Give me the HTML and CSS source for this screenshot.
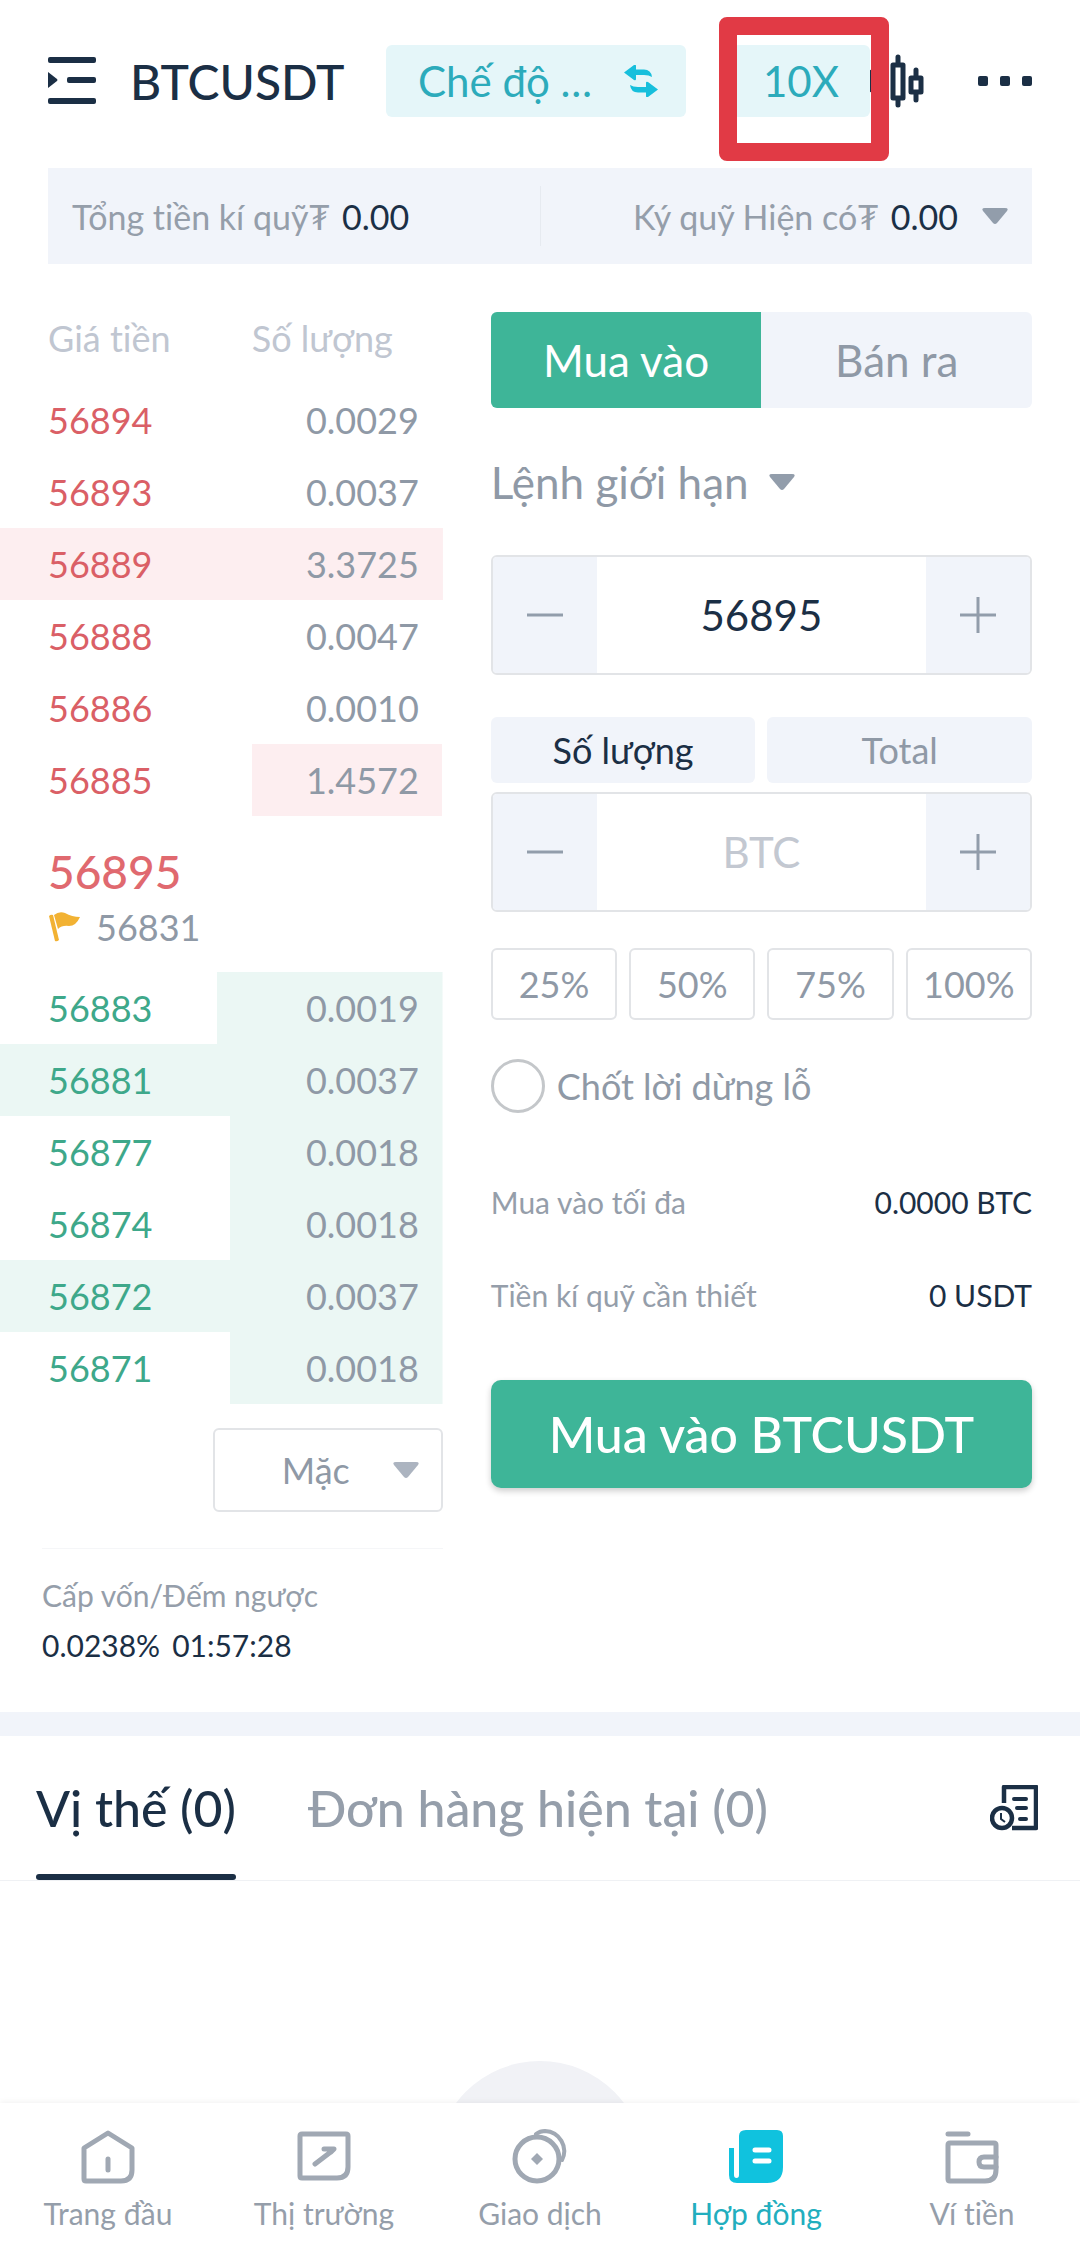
FILE: index.html
```html
<!DOCTYPE html>
<html lang="vi">
<head>
    <meta charset="UTF-8">
    <meta name="viewport" content="width=device-width, initial-scale=1.0">
    <title>BTCUSDT - Hợp đồng</title>
    <link rel="stylesheet" href="styles.css">
</head>
<body>

    <main>
        <header class="topbar">
            <button class="icon-btn" aria-label="Danh sách">
                <svg width="48" height="48" viewBox="0 0 48 48" fill="#1b2f45">
                    <rect width="48" height="6" rx="2"/>
                    <rect x="19" y="20" width="29" height="6" rx="2"/>
                    <rect y="41" width="48" height="6" rx="2"/>
                    <path d="M0 15l9 7q1 1 0 2l-9 7z"/>
                </svg>
            </button>
            <h1>BTCUSDT</h1>
            <button class="pill mode">
                <span>Chế độ …</span>
                <svg width="34" height="32" viewBox="0 0 34 32" fill="#17bfdc">
                    <path d="M0 7.500L10 0q2-1 2 1v3.500h8q7 0 8 7.500-3-2-8-2h-8V14q0 2-2 1z"/>
                    <path d="M34 24.500L24 32q-2 1-2-1v-3.500h-8q-7 0-8-7.500 3 2 8 2h8V18q0-2 2-1z"/>
                </svg>
            </button>
            <div class="leverage">
                <button class="pill">10X</button>
                <span class="marker"></span>
            </div>
            <button class="icon-btn" aria-label="Biểu đồ">
                <svg width="54" height="54" viewBox="0 0 54 54" fill="none" stroke="#1b2f45" stroke-width="5" stroke-linejoin="round" stroke-linecap="round">
                    <path d="M2 18v18"/>
                    <path d="M23 11h10v33H23zM28 3v8M28 44v7"/>
                    <path d="M41 24h10v14H41zM46 16v8M46 38v8"/>
                </svg>
            </button>
            <button class="icon-btn more" aria-label="Thêm">
                <svg width="54" height="10" viewBox="0 0 54 10" fill="#1b2f45">
                    <rect width="10" height="10" rx="2"/>
                    <rect x="22" width="10" height="10" rx="2"/>
                    <rect x="44" width="10" height="10" rx="2"/>
                </svg>
            </button>
        </header>

        <section class="margin-bar">
            <p>Tổng tiền kí quỹ₮ <b>0.00</b></p>
            <p class="available">Ký quỹ Hiện có₮ <b>0.00</b>
                <svg class="caret" width="26" height="16" viewBox="0 0 26 16"><path d="M3 0h20q4 0 2 3L15 15q-2 2-4 0L1 3q-2-3 2-3z"/></svg>
            </p>
        </section>

        <div class="trade">
            <section class="book">
                <table class="asks">
                    <thead>
                        <tr><th>Giá tiền</th><th>Số lượng</th></tr>
                    </thead>
                    <tbody>
                        <tr><td>56894</td><td>0.0029</td></tr>
                        <tr><td>56893</td><td>0.0037</td></tr>
                        <tr style="--depth: 100%"><td>56889</td><td>3.3725</td></tr>
                        <tr><td>56888</td><td>0.0047</td></tr>
                        <tr><td>56886</td><td>0.0010</td></tr>
                        <tr style="--depth: 43%"><td>56885</td><td>1.4572</td></tr>
                    </tbody>
                </table>

                <div class="last">
                    <strong>56895</strong>
                    <p>
                        <svg width="32" height="30" viewBox="0 0 32 30" fill="#f2b233">
                            <path d="M1 4q2-2 4-1l6 25q-2 2-4 1z"/>
                            <path d="M6 3q5-4 11-2 7 4 15 4-4 9-11 9-7-1-11 3z"/>
                        </svg>
                        56831
                    </p>
                </div>

                <table class="bids">
                    <tbody>
                        <tr style="--depth: 51%"><td>56883</td><td>0.0019</td></tr>
                        <tr style="--depth: 100%"><td>56881</td><td>0.0037</td></tr>
                        <tr style="--depth: 48%"><td>56877</td><td>0.0018</td></tr>
                        <tr style="--depth: 48%"><td>56874</td><td>0.0018</td></tr>
                        <tr style="--depth: 100%"><td>56872</td><td>0.0037</td></tr>
                        <tr style="--depth: 48%"><td>56871</td><td>0.0018</td></tr>
                    </tbody>
                </table>

                <div class="depth-select">
                    <select aria-label="Độ sâu"><option>Mặc</option></select>
                    <svg class="caret" width="26" height="16" viewBox="0 0 26 16"><path d="M3 0h20q4 0 2 3L15 15q-2 2-4 0L1 3q-2-3 2-3z"/></svg>
                </div>

                <div class="funding">
                    <p>Cấp vốn/Đếm ngược</p>
                    <p class="value"><span>0.0238%</span><span>01:57:28</span></p>
                </div>
            </section>

            <form class="order">
                <div class="side">
                    <button type="button" class="buy">Mua vào</button>
                    <button type="button">Bán ra</button>
                </div>

                <div class="order-type">
                    <select aria-label="Loại lệnh"><option>Lệnh giới hạn</option></select>
                    <svg class="caret" width="26" height="16" viewBox="0 0 26 16"><path d="M3 0h20q4 0 2 3L15 15q-2 2-4 0L1 3q-2-3 2-3z"/></svg>
                </div>

                <div class="stepper">
                    <button type="button" aria-label="Giảm giá"><svg width="36" height="36" viewBox="0 0 36 36"><path d="M0 18h36"/></svg></button>
                    <input type="text" value="56895" aria-label="Giá">
                    <button type="button" aria-label="Tăng giá"><svg width="36" height="36" viewBox="0 0 36 36"><path d="M0 18h36M18 0v36"/></svg></button>
                </div>

                <div class="unit">
                    <button type="button" class="active">Số lượng</button>
                    <button type="button">Total</button>
                </div>
                <div class="stepper">
                    <button type="button" aria-label="Giảm số lượng"><svg width="36" height="36" viewBox="0 0 36 36"><path d="M0 18h36"/></svg></button>
                    <input type="text" placeholder="BTC" aria-label="Số lượng">
                    <button type="button" aria-label="Tăng số lượng"><svg width="36" height="36" viewBox="0 0 36 36"><path d="M0 18h36M18 0v36"/></svg></button>
                </div>

                <div class="percent">
                    <button type="button">25%</button>
                    <button type="button">50%</button>
                    <button type="button">75%</button>
                    <button type="button">100%</button>
                </div>

                <label class="tpsl"><input type="checkbox"> Chốt lời dừng lỗ</label>

                <p class="info"><span>Mua vào tối đa</span><b>0.0000 BTC</b></p>
                <p class="info"><span>Tiền kí quỹ cần thiết</span><b>0 USDT</b></p>

                <button type="submit" class="submit">Mua vào BTCUSDT</button>
            </form>
        </div>

        <section class="positions">
            <div class="tabs">
                <button class="active">Vị thế (0)</button>
                <button>Đơn hàng hiện tại (0)</button>
                <button class="history" aria-label="Lịch sử lệnh">
                    <svg width="48" height="46" viewBox="0 0 48 46" fill="none" stroke="#1b2f45">
                        <path d="M14 18V2h32v41H22" stroke-width="4.500" stroke-linejoin="round"/>
                        <path d="M24 14h12M27 23h9M30 34h6" stroke-width="4" stroke-linecap="round"/>
                        <circle cx="12" cy="33" r="10" stroke-width="4.500"/>
                        <path d="M11 28v6l4 3" stroke-width="2"/>
                    </svg>
                </button>
            </div>
            <div class="empty"></div>
        </section>
    </main>

    <nav class="bottom-nav">
        <a href="#">
            <svg width="56" height="56" viewBox="0 0 56 56">
                <path d="M4 19L28 4l24 15v22q0 11-11 11H6q-2 0-2-2z"/>
                <path d="M28 30v11"/>
            </svg>
            Trang đầu
        </a>
        <a href="#">
            <svg width="56" height="56" viewBox="0 0 56 56">
                <path d="M6 5h44q2 0 2 2v31q0 11-11 11H6q-2 0-2-2V7q0-2 2-2z"/>
                <path d="M19 35l17-13M28 20h10l-3 3"/>
            </svg>
            Thị trường
        </a>
        <a href="#">
            <svg width="56" height="56" viewBox="0 0 56 56">
                <circle cx="25" cy="30" r="22"/>
                <path d="M24 5q4-3 9-3a20 20 0 0 1 17 29" stroke-width="4"/>
                <path class="solid" d="M25 24l6 6-6 6-6-6z"/>
            </svg>
            Giao dịch
        </a>
        <a href="#" class="active">
            <svg width="56" height="56" viewBox="0 0 56 56">
                <path class="solid" d="M18 1h31q6 0 6 6v31q0 16-16 16H9q-8 0-8-8V19h5v27q0 3 2.500 3t2.500-3V7q0-6 7-6z"/>
                <path class="lines" d="M27 21h14M27 32h14"/>
            </svg>
            Hợp đồng
        </a>
        <a href="#">
            <svg width="56" height="56" viewBox="0 0 56 56">
                <path d="M4 5h20M6 14h44q2 0 2 2v25q0 11-11 11H6q-2 0-2-2V16q0-2 2-2z"/>
                <path d="M52 28H40q-5 0-5 5t5 5h12"/>
            </svg>
            Ví tiền
        </a>
    </nav>

</body>
</html>
```
FILE: styles.css
```css
* { box-sizing: border-box; margin: 0; padding: 0; }
body { display: flex; flex-direction: column; height: 100vh; background: #fff; color: #1b2f45; font-family: Lato, "Noto Sans", sans-serif; font-size: 36px; font-variant-ligatures: none; }
main { flex: 1; min-height: 0; overflow: hidden; }
button, input, select { font: inherit; color: inherit; border: none; background: none; outline: none; }
button { cursor: pointer; }
select { appearance: none; }
b { font-weight: normal; color: #1b2f45; }
svg { display: block; flex: none; }
.caret { fill: #929dab; }

/* header */
.topbar { display: flex; align-items: center; height: 162px; padding: 0 48px; }
.topbar h1 { margin-left: 34px; font-size: 48px; font-weight: 500; }
.pill { height: 72px; border-radius: 6px; background: #e5f6f9; color: #2cabbb; font-size: 42px; }
.mode { display: flex; align-items: center; justify-content: space-between; width: 300px; margin-left: auto; padding: 0 28px 0 32px; }
.leverage { position: relative; margin-left: 46px; }
.leverage .pill { width: 138px; }
.marker { position: absolute; inset: -28px -19px -44px -13px; border: 18px solid #e13a45; border-radius: 8px; pointer-events: none; }
.more { margin-left: 54px; }

.margin-bar { display: flex; align-items: center; height: 96px; margin: 6px 48px 0; padding: 0 24px; background: #f1f4fa; color: #959eaa; font-size: 34px; }
.margin-bar p { flex: 1; display: flex; align-items: center; gap: 12px; }
.margin-bar .available { justify-content: flex-end; height: 60px; border-left: 1px solid #e6eaf0; }
.margin-bar .caret { margin-left: 12px; }

/* order book */
.trade { display: grid; grid-template-columns: minmax(0, 41fr) minmax(0, 59fr); }
.book { padding-top: 36px; }
.book table { width: 100%; border-collapse: collapse; }
.book tr { height: 72px; }
.book th { height: 84px; padding-bottom: 8px; color: #c0c6d1; font-weight: normal; text-align: left; }
.book th:last-child { text-align: right; padding-right: 50px; }
.book td:first-child, .book th:first-child { padding-left: 48px; }
.book td:last-child { padding-right: 24px; color: #8f99a6; text-align: right; }
.asks td { color: #da5f66; }
.bids td { color: #3ea88a; }
.asks tbody tr { background: linear-gradient(#fdeef0, #fdeef0) right / var(--depth, 0) 100% no-repeat; }
.bids tbody tr { background: linear-gradient(#ebf7f4, #ebf7f4) right / var(--depth, 0) 100% no-repeat; }
.last { height: 156px; padding: 26px 48px 0; }
.last strong { display: block; color: #e0696f; font-size: 46px; font-weight: 500; line-height: 60px; }
.last p { display: flex; align-items: center; gap: 16px; color: #8f99a6; line-height: 50px; }
.depth-select { position: relative; width: 230px; height: 84px; margin: 24px 0 36px auto; }
.depth-select select { width: 100%; height: 100%; padding: 0 48px 0 24px; border: 2px solid #e2e4e7; border-radius: 6px; color: #8f99a6; text-align: right; text-align-last: center; }
.depth-select .caret { position: absolute; top: 34px; right: 24px; fill: #acb4c0; }
.funding { margin-left: 42px; padding: 21px 0 42px; border-top: 1px solid #f5f6f8; color: #959eaa; font-size: 30px; line-height: 50px; }
.funding .value { display: flex; gap: 12px; color: #1b2f45; }

/* order form */
.order { padding: 48px 48px 0; color: #8f99a6; }
.side { display: grid; grid-template-columns: 1fr 1fr; border-radius: 6px; background: #f1f4fa; overflow: hidden; font-size: 44px; }
.side button { height: 96px; }
.side .buy { background: #3eb598; color: #fff; }
.order-type { display: flex; align-items: center; gap: 20px; height: 147px; font-size: 44px; }
.stepper { display: flex; height: 120px; border: 2px solid #e2e4e7; border-radius: 6px; overflow: hidden; font-size: 42px; }
.stepper button { display: grid; place-items: center; flex: none; width: 104px; background: #f1f4fa; }
.stepper svg { stroke: #929dab; stroke-width: 3; }
.stepper input { flex: 1; min-width: 0; color: #1b2f45; text-align: center; }
.stepper input::placeholder { color: #c3c8d1; }
.unit { display: grid; grid-template-columns: 1fr 1fr; gap: 12px; margin: 42px 0 9px; }
.unit button { height: 66px; border-radius: 6px; background: #f1f4fa; }
.unit .active { color: #1b2f45; }
.percent { display: grid; grid-template-columns: repeat(4, 1fr); gap: 12px; margin-top: 36px; }
.percent button { height: 72px; border: 2px solid #e2e4e7; border-radius: 6px; }
.tpsl { display: flex; align-items: center; gap: 12px; height: 54px; margin: 39px 0 42px; }
.tpsl input { appearance: none; width: 54px; height: 54px; border: 3px solid #c4c7ca; border-radius: 50%; }
.info { display: flex; align-items: center; justify-content: space-between; height: 93px; color: #959eaa; font-size: 30px; }
.submit { width: 100%; height: 108px; margin-top: 39px; border-radius: 10px; background: #3eb598; box-shadow: 0 3px 6px rgba(0, 0, 0, 0.2); color: #fff; font-size: 50px; font-weight: 500; }

/* positions */
.positions { border-top: 24px solid #f1f4fa; }
.tabs { display: flex; align-items: center; gap: 72px; height: 145px; padding: 0 42px 0 36px; border-bottom: 1px solid #eff1f4; font-size: 50px; font-weight: 500; color: #959eaa; }
.tabs button { position: relative; height: 144px; }
.tabs .active { color: #1b2f45; }
.tabs .active::after { content: ""; position: absolute; left: 0; right: 0; bottom: 0; height: 6px; border-radius: 3px; background: #1b2f45; }
.tabs .history { margin-left: auto; }
.empty { width: 210px; height: 210px; margin: 180px auto 0; border-radius: 50%; background: #f1f2f6; }

/* bottom navigation */
.bottom-nav { position: relative; display: grid; grid-template-columns: repeat(5, 1fr); height: 147px; background: #fff; box-shadow: 0 -1px 6px rgba(0, 0, 0, 0.06); }
.bottom-nav a { display: flex; flex-direction: column; align-items: center; gap: 10px; padding-top: 26px; color: #959eaa; font-size: 30px; text-decoration: none; }
.bottom-nav svg { fill: none; stroke: #a0a8b3; stroke-width: 5; stroke-linecap: round; stroke-linejoin: round; }
.bottom-nav .solid { fill: #a0a8b3; stroke: none; }
.bottom-nav .active { color: #22aebe; }
.bottom-nav .active .solid { fill: #10c2de; }
.bottom-nav .lines { stroke: #fff; }
```
